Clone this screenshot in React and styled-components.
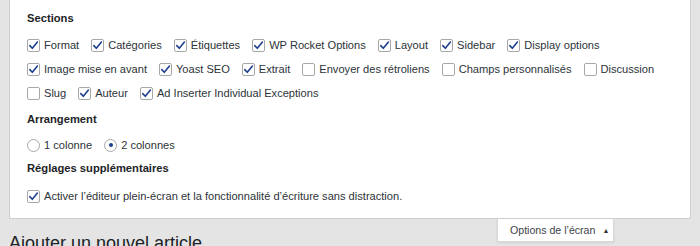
import React from "react";
import styled, { createGlobalStyle } from "styled-components";

const GlobalStyle = createGlobalStyle`
  html, body {
    margin: 0;
    padding: 0;
    background: #e4e4e4;
    overflow: hidden;
  }
  body {
    font-family: "Liberation Sans", Arial, sans-serif;
    color: #2c3338;
  }
`;

const sectionRows = [
  [
    { label: "Format", checked: true },
    { label: "Catégories", checked: true },
    { label: "Étiquettes", checked: true },
    { label: "WP Rocket Options", checked: true },
    { label: "Layout", checked: true },
    { label: "Sidebar", checked: true },
    { label: "Display options", checked: true },
  ],
  [
    { label: "Image mise en avant", checked: true },
    { label: "Yoast SEO", checked: true },
    { label: "Extrait", checked: true },
    { label: "Envoyer des rétroliens", checked: false },
    { label: "Champs personnalisés", checked: false },
    { label: "Discussion", checked: false },
  ],
  [
    { label: "Slug", checked: false },
    { label: "Auteur", checked: true },
    { label: "Ad Inserter Individual Exceptions", checked: true },
  ],
];

function CheckBox({ checked }) {
  return (
    <Box>
      {checked && (
        <svg width="11" height="11" viewBox="0 0 11 11">
          <path
            d="M1.8 5.6 L4.3 8.3 L9.4 2"
            fill="none"
            stroke="#1f3f8f"
            strokeWidth="1.6"
            strokeLinecap="round"
            strokeLinejoin="round"
          />
        </svg>
      )}
    </Box>
  );
}

export default function App() {
  return (
    <>
      <GlobalStyle />
      <Page>
        <Panel>
          <Heading $bottom={7}>Sections</Heading>
          {sectionRows.map((row, i) => (
            <Row key={i}>
              {row.map((item) => (
                <Option key={item.label}>
                  <CheckBox checked={item.checked} />
                  {item.label}
                </Option>
              ))}
            </Row>
          ))}

          <Heading $top={6} $bottom={6}>Arrangement</Heading>
          <Row>
            <Option>
              <Radio />1 colonne
            </Option>
            <Option>
              <Radio $checked />2 colonnes
            </Option>
          </Row>

          <Heading $top={3} $bottom={8}>Réglages supplémentaires</Heading>
          <Row>
            <Option>
              <CheckBox checked />
              Activer l’éditeur plein-écran et la fonctionnalité d’écriture sans distraction.
            </Option>
          </Row>
        </Panel>

        <Footer>
          <ScreenTab>
            Options de l’écran <Arrow>▲</Arrow>
          </ScreenTab>
          <PageTitle>Ajouter un nouvel article</PageTitle>
        </Footer>
      </Page>
    </>
  );
}

const Page = styled.div`
  padding: 0 9px;
  height: 246px;
`;

const Panel = styled.div`
  background: #fff;
  border: 1px solid #cfcfcf;
  border-top: none;
  padding: 10px 17px 0 17px;
  box-sizing: border-box;
  height: 219px;
`;

const Heading = styled.div`
  font-size: 11.2px;
  font-weight: 700;
  color: #1d2327;
  line-height: 16px;
  margin-top: ${(p) => p.$top || 0}px;
  margin-bottom: ${(p) => p.$bottom || 0}px;
`;

const Row = styled.div`
  display: flex;
  align-items: center;
  gap: 12px;
  height: 24px;
`;

const Option = styled.label`
  display: flex;
  align-items: center;
  gap: 4px;
  font-size: 11.1px;
  color: #2c3338;
  white-space: nowrap;
`;

const Box = styled.span`
  width: 13px;
  height: 13px;
  box-sizing: border-box;
  border: 1px solid #a7a7a7;
  border-radius: 2px;
  background: #fff;
  display: flex;
  align-items: center;
  justify-content: center;
`;

const Radio = styled.span`
  width: 13px;
  height: 13px;
  box-sizing: border-box;
  border: 1px solid #a7a7a7;
  border-radius: 50%;
  background: #fff;
  display: flex;
  align-items: center;
  justify-content: center;

  &::after {
    content: "";
    display: ${(p) => (p.$checked ? "block" : "none")};
    width: 4px;
    height: 4px;
    border-radius: 50%;
    background: #1f3f8f;
  }
`;

const Footer = styled.div``;

const ScreenTab = styled.div`
  float: right;
  margin-right: 77px;
  height: 23px;
  width: 117px;
  box-sizing: border-box;
  padding-left: 12px;
  background: #fff;
  border: 1px solid #d8d8d8;
  border-top: none;
  box-shadow: 0 1px 2px rgba(0, 0, 0, 0.08);
  font-size: 10.6px;
  color: #3c434a;
  white-space: nowrap;
  display: flex;
  align-items: center;
  gap: 7px;
`;

const Arrow = styled.span`
  font-size: 7px;
  color: #333;
`;

const PageTitle = styled.h1`
  margin: 0;
  padding-top: 12px;
  font-size: 18px;
  font-weight: 400;
  line-height: 24px;
  color: #1d2327;
`;
